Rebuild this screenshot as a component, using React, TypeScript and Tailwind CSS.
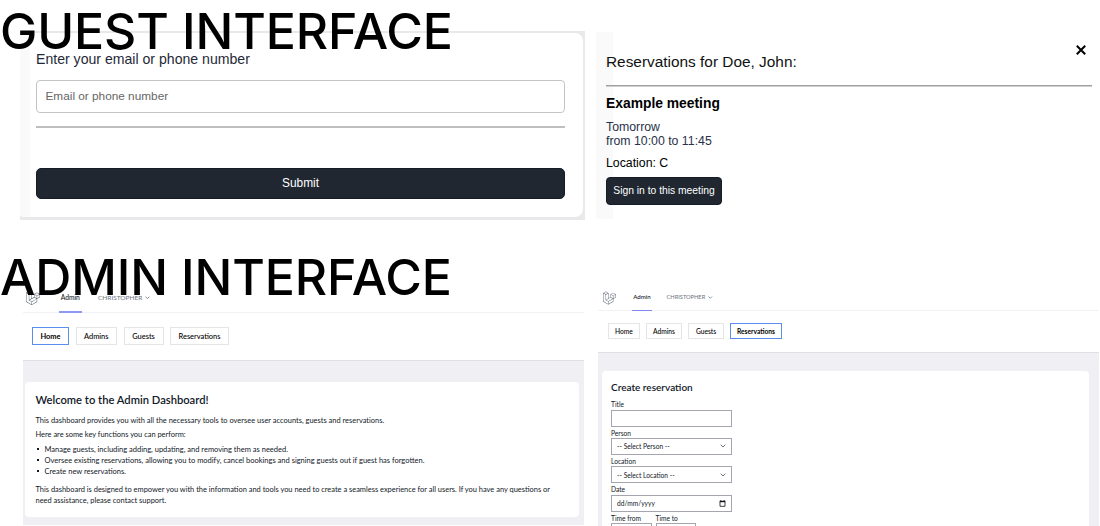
import { FaLaravel } from "react-icons/fa6";
import type { ReactNode } from "react";

function Chevron({ className }: { className: string }) {
  return (
    <svg viewBox="0 0 6 4" className={className} fill="none" stroke="currentColor" strokeWidth="1">
      <path d="M0.7 0.7 L3 3 L5.3 0.7" />
    </svg>
  );
}

function Title({ children, className }: { children: ReactNode; className: string }) {
  return (
    <h1 className={`absolute left-0 z-10 whitespace-nowrap font-[Inter,sans-serif] text-[50px] leading-[60px] font-medium tracking-[-0.14px] text-black ${className}`}>
      {children}
    </h1>
  );
}

function GuestLookup() {
  return (
    <section className="flex h-[189px] w-[565px] flex-col bg-[#e9e9eb] pt-[2px] pr-[2px] pb-[3px] font-['Liberation_Sans',sans-serif]">
      <div className="flex flex-1 overflow-hidden rounded-r-[8px] rounded-bl-[4px] bg-white">
        <div className="w-[10px] bg-[#fafafa]" />
        <div className="flex flex-1 flex-col pt-[16px] pr-[18px] pl-[6px]">
          <label className="h-[31px] text-[14.1px] leading-[20px] text-[#1f2937]">Enter your email or phone number</label>
          <div className="flex h-[33px] items-center rounded-[4px] border border-[#c4c4c4] px-[8.5px] text-[11.8px] text-[#666]">
            Email or phone number
          </div>
          <div className="mt-[13px] h-[2px] bg-[#bfbfbf]" />
          <button className="mt-[40px] h-[31px] rounded-[5px] border border-[#141c26] bg-[#202731] text-[11.9px] leading-[29px] text-white">Submit</button>
        </div>
      </div>
    </section>
  );
}

function GuestReservations() {
  return (
    <section className="flex h-[187px] w-[504px] bg-[linear-gradient(to_right,#fafafa_17px,#fff_17px)] font-['Liberation_Sans',sans-serif]">
      <div className="flex w-[496px] flex-col pl-[10px]">
        <div className="flex h-[53px] items-start justify-between pt-[12px] pr-[6px]">
          <h2 className="pt-[8px] text-[15.4px] leading-[20px] text-[#111]">Reservations for Doe, John:</h2>
          <svg viewBox="0 0 10 10" className="mt-[1px] h-[10px] w-[10px]" fill="none" stroke="#000" strokeWidth="2">
            <path d="M0.8 0.8 L9.2 9.2 M9.2 0.8 L0.8 9.2" />
          </svg>
        </div>
        <div className="h-[2px] bg-[linear-gradient(#a0a0a0_50%,#cfcfcf_50%)]" />
        <h3 className="mt-[6px] text-[13.85px] leading-[21px] font-bold text-black">Example meeting</h3>
        <p className="mt-[5.5px] text-[12.3px] leading-[14px] text-[#29324a]">
          Tomorrow
          <br />
          from 10:00 to 11:45
        </p>
        <p className="mt-[8.5px] text-[12.3px] leading-[14px] text-black">Location: C</p>
        <button className="mt-[7px] h-[28px] w-[116px] rounded-[4px] border border-[#141c26] bg-[#202731] text-[10.3px] leading-[24px] text-white">
          Sign in to this meeting
        </button>
      </div>
    </section>
  );
}

const welcomeItems = [
  "Manage guests, including adding, updating, and removing them as needed.",
  "Oversee existing reservations, allowing you to modify, cancel bookings and signing guests out if guest has forgotten.",
  "Create new reservations.",
];

function AdminHome() {
  const tab = "flex items-center justify-center border border-[#e3e5e9] font-medium";
  return (
    <section className="flex h-[237px] w-[561px] flex-col font-[Lato,sans-serif] text-[7.45px] leading-[11px] text-[#111827]">
      <nav className="flex h-[25px] border-b border-[#f1f2f5] pl-[3px]">
        <FaLaravel className="mt-[3px] h-[14px] w-[14px] text-[#4b5563]" />
        <div className="ml-[19px] flex h-[25px] w-[22.5px] justify-center border-b-2 border-[#8f98f5] pt-[3.5px] text-[6.7px] font-medium">Admin</div>
        <div className="ml-[16.5px] flex pt-[3.5px] text-[6.5px] text-[#6b7280]">
          CHRISTOPHER
          <Chevron className="mt-[4px] ml-[3px] h-[3.5px] w-[5px]" />
        </div>
      </nav>
      <div className="flex h-[48px] items-start gap-[6.5px] border-b border-[#dedfe3] pt-[14px] pl-[9px] text-black">
        <div className="flex h-[18px] w-[37px] items-center justify-center border border-[#5b8def] font-bold">Home</div>
        <div className={`${tab} h-[18px] w-[41.5px]`}>Admins</div>
        <div className={`${tab} h-[18px] w-[40px]`}>Guests</div>
        <div className={`${tab} h-[18px] w-[59px]`}>Reservations</div>
      </div>
      <div className="h-[164px] bg-[#efeff4] pt-[21px] pr-[5px] pl-[2px]">
        <div className="h-[135px] rounded-[4px] bg-white pt-[11px] pl-[10.5px]">
          <h2 className="h-[21.5px] text-[11.2px] leading-[14px] font-semibold text-[#111827]">Welcome to the Admin Dashboard!</h2>
          <p className="tracking-[0.01px]">This dashboard provides you with all the necessary tools to oversee user accounts, guests and reservations.</p>
          <p className="mt-[3.7px]">Here are some key functions you can perform:</p>
          <ul className="mt-[3.7px] mb-[7px] text-[7.5px]">
            {welcomeItems.map((item) => (
              <li key={item} className="flex items-center gap-[6px] pl-[1px]">
                <span className="h-[2px] w-[2px] bg-[#111827]" />
                {item}
              </li>
            ))}
          </ul>
          <p>
            This dashboard is designed to empower you with the information and tools you need to create a seamless experience for all users. If you have any questions or
            <br />
            need assistance, please contact support.
          </p>
        </div>
      </div>
    </section>
  );
}

function Field({ label, children }: { label: string; children?: ReactNode }) {
  return (
    <div className="flex h-[28.4px] w-[120.5px] flex-col">
      <label className="h-[10.4px] leading-[10px]">{label}</label>
      <div className="flex h-[17px] items-center justify-between border border-[#a3a5b0] px-[5px] pb-[0.5px]">{children}</div>
    </div>
  );
}

function AdminReservations() {
  const tab = "flex items-center justify-center border border-[#e3e5e9] font-medium";
  return (
    <section className="flex h-[239px] w-[501px] flex-col font-[Lato,sans-serif] text-[6.65px] leading-[10px] text-[#111827]">
      <nav className="flex h-[23px] border-b border-[#f1f2f5] pl-[5px]">
        <FaLaravel className="mt-[3px] h-[14px] w-[13px] text-[#4b5563]" />
        <div className="ml-[16px] flex h-[23px] w-[20px] justify-center border-b border-[#8088f0] pt-[4px] text-[6.1px] font-medium">Admin</div>
        <div className="ml-[14.5px] flex pt-[4px] text-[5.7px] text-[#6b7280]">
          CHRISTOPHER
          <Chevron className="mt-[3.5px] ml-[3px] h-[3px] w-[4.5px]" />
        </div>
      </nav>
      <div className="flex h-[42px] items-start gap-[6px] border-b border-[#dedfe3] pt-[12px] pl-[10px] text-black">
        <div className={`${tab} h-[16px] w-[32px]`}>Home</div>
        <div className={`${tab} h-[16px] w-[36px]`}>Admins</div>
        <div className={`${tab} h-[16px] w-[36px]`}>Guests</div>
        <div className="flex h-[16px] w-[52px] items-center justify-center border border-[#5b8def] font-bold">Reservations</div>
      </div>
      <div className="h-[174px] overflow-hidden bg-[#efeff4] pt-[18px] pr-[10px] pl-[4px]">
        <div className="h-[170px] rounded-t-[4px] bg-white pt-[10px] pl-[9px]">
          <h2 className="h-[18.2px] text-[10px] leading-[12px] font-semibold text-[#111827]">Create reservation</h2>
          <Field label="Title" />
          <Field label="Person">
            -- Select Person --
            <Chevron className="h-[4px] w-[6px] text-[#6b7280]" />
          </Field>
          <Field label="Location">
            -- Select Location --
            <Chevron className="h-[4px] w-[6px] text-[#6b7280]" />
          </Field>
          <Field label="Date">
            dd/mm/yyyy
            <svg viewBox="0 0 7 7" className="h-[7px] w-[7px]" fill="none" stroke="#111">
              <path d="M1 2 V6.3 H6 V2" strokeWidth="0.8" />
              <path d="M0.6 1.5 H6.4" strokeWidth="1.4" />
              <path d="M1.8 0 V1 M5.2 0 V1" strokeWidth="0.8" />
            </svg>
          </Field>
          <div className="flex gap-[4px]">
            {["Time from", "Time to"].map((label) => (
              <div key={label} className="flex w-[40.5px] flex-col">
                <label className="h-[10.4px] whitespace-nowrap leading-[10px]">{label}</label>
                <div className="h-[17px] border border-[#a3a5b0]" />
              </div>
            ))}
          </div>
        </div>
      </div>
    </section>
  );
}

export default function App() {
  return (
    <main className="relative h-[526px] w-[1100px] overflow-hidden bg-white">
      <Title className="top-[1px]">GUEST INTERFACE</Title>
      <Title className="top-[247px]">ADMIN INTERFACE</Title>
      <div className="flex h-[288px] items-start gap-[11px] pt-[31px] pl-[20px]">
        <GuestLookup />
        <div className="pt-[1px]">
          <GuestReservations />
        </div>
      </div>
      <div className="flex items-start gap-[14px] pl-[23px]">
        <AdminHome />
        <AdminReservations />
      </div>
    </main>
  );
}
